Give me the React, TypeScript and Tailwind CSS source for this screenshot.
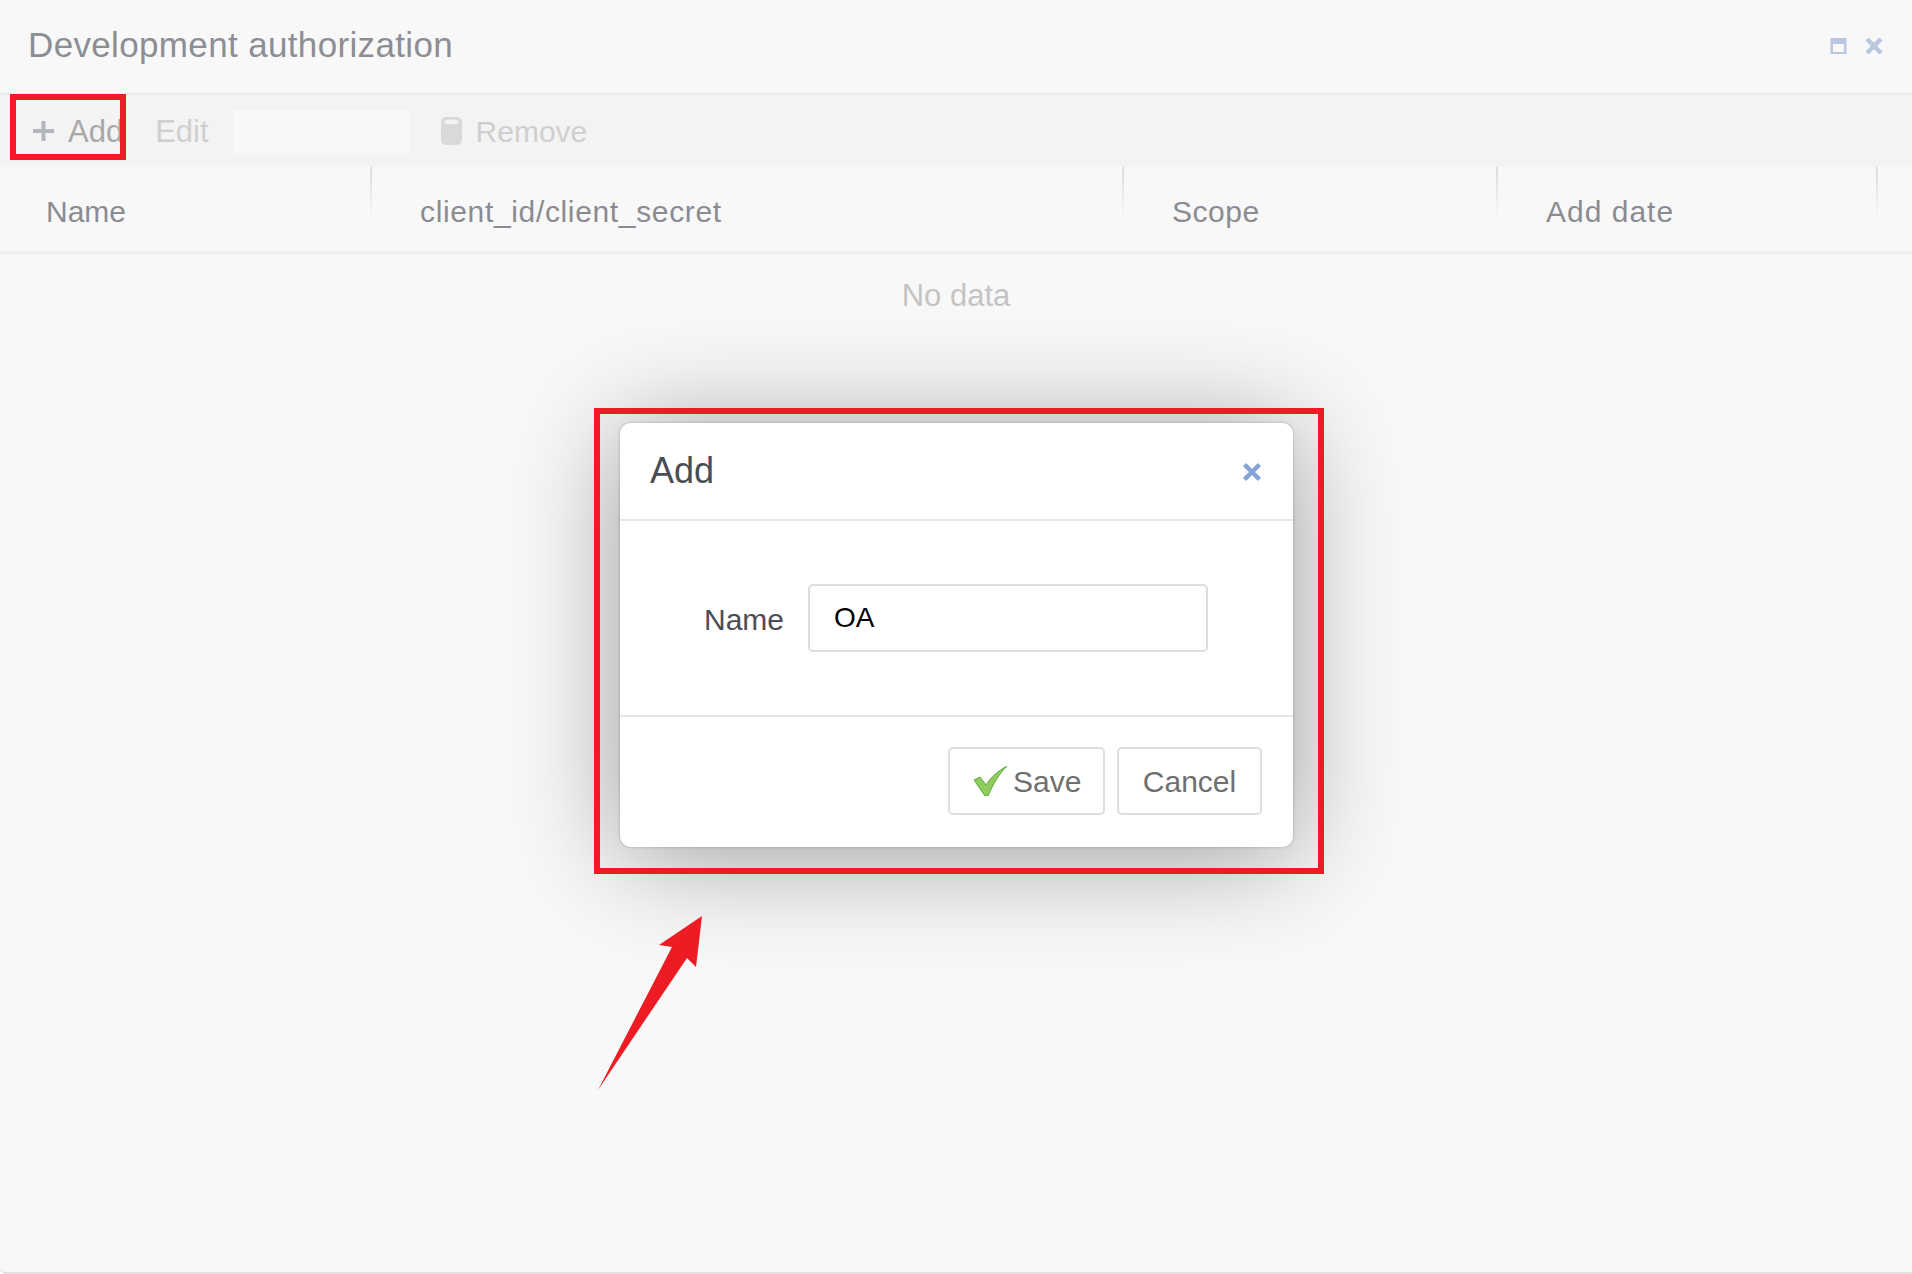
import { useState } from "react";

const columns = [
  { title: "Name", cls: "w-[371px] pl-[46px]" },
  { title: "client_id/client_secret", cls: "w-[752px] pl-[49px] tracking-[0.65px]" },
  { title: "Scope", cls: "w-[374px] pl-[49px] tracking-[0.5px]" },
  { title: "Add date", cls: "w-[380px] pl-[49px] tracking-[1px]" },
];

export default function App() {
  const [name, setName] = useState("OA");
  return (
    <div className="relative box-border h-[1274px] overflow-hidden rounded-bl-[6px] border-b-2 border-[#e2e2e2] bg-[#f8f8f8] font-['Liberation_Sans',Arial,sans-serif]">
      {/* window behind the dialog */}
      <div className="flex h-[95px] items-center justify-between border-b-2 border-[#ebebeb] pl-[28px] pr-[29px]">
        <div className="pb-[3px] text-[35px] tracking-[0.35px] text-[#8c8e94]">Development authorization</div>
        <div className="flex items-center gap-[18px] pb-[2px]">
          <svg width="17" height="16" viewBox="0 0 17 16">
            <rect x="0.5" y="0" width="16" height="16" fill="#b9c7e0" />
            <rect x="3" y="6" width="11" height="8" fill="#f8f8f8" />
          </svg>
          <svg width="18" height="16" viewBox="0 0 18 16">
            <path d="M2 1 L16 15 M16 1 L2 15" stroke="#b9c7e0" strokeWidth="4.5" />
          </svg>
        </div>
      </div>

      <div className="flex h-[72px] items-center bg-[#f3f3f3] text-[30px]">
        <div className="flex items-center pl-[33px] text-[31px] text-[#a8a8a8]">
          <svg width="21" height="20" viewBox="0 0 21 20">
            <path d="M10.5 0 V20 M0 10 H21" stroke="#b3b6bd" strokeWidth="4" />
          </svg>
          <span className="ml-[14px] pt-[2px]">Add</span>
        </div>
        <span className="ml-[32px] pt-[2px] text-[31px] text-[#cfcfcf]">Edit</span>
        <div className="ml-[24px] h-[43px] w-[176px] bg-[#f8f8f8]" />
        <svg className="ml-[32px]" width="21" height="28" viewBox="0 0 21 28">
          <rect x="0" y="0" width="21" height="28" rx="5" fill="#d8d9db" />
          <ellipse cx="10.5" cy="5" rx="7.5" ry="2.5" fill="#f3f3f3" />
        </svg>
        <span className="ml-[14px] text-[#cfcfcf]">Remove</span>
      </div>

      <div className="flex h-[88px] border-b-4 border-[#efefef]">
        {columns.map((c) => (
          <div key={c.title} className={`relative flex items-center pt-[4px] text-[30px] text-[#8a8c92] ${c.cls}`}>
            {c.title}
            <span className="absolute -right-[1px] top-0 h-[52px] w-[2px] bg-gradient-to-b from-[#dcdcdc] to-[#f8f8f8]" />
          </div>
        ))}
      </div>
      <div className="pt-[18px] text-center text-[31px] text-[#c4c4c4]">No data</div>

      {/* dialog */}
      <div className="absolute left-[620px] top-[423px] w-[673px] rounded-[11px] bg-white shadow-[0_0_3px_rgba(0,0,0,0.25),0_8px_110px_rgba(0,0,0,0.38)]">
        <div className="flex h-[98px] items-center justify-between border-b-2 border-[#e6e6e6] pl-[30px] pr-[31px]">
          <span className="text-[36px] text-[#4a4d55]">Add</span>
          <svg className="mt-[2px]" width="20" height="20" viewBox="0 0 20 20">
            <path d="M2.5 2.5 L17.5 17.5 M17.5 2.5 L2.5 17.5" stroke="#86a3d6" strokeWidth="4.5" />
          </svg>
        </div>
        <div className="flex h-[196px] items-center border-b-2 border-[#e6e6e6] pl-[84px]">
          <label className="pt-[2px] text-[30px] text-[#4a4d55]">Name</label>
          <input
            value={name}
            onChange={(e) => setName(e.target.value)}
            className="ml-[24px] h-[68px] w-[400px] rounded-[5px] border-2 border-[#dedede] bg-white pl-[24px] text-[28px] text-black outline-none"
          />
        </div>
        <div className="flex h-[130px] items-start justify-end gap-[12px] pr-[31px] pt-[30px]">
          <button className="flex h-[68px] w-[157px] items-center rounded-[5px] border-2 border-[#dedede] pl-[24px] text-[30px] text-[#6f6f6f]">
            <svg width="33" height="30" viewBox="0 0 33 30">
              <path d="M0 14 L6 11 L12 19 C17 11 24 5 33 0 C25 8 19 18 14 30 L11 30 Z" fill="#8fcc5c" stroke="#5fa83d" strokeWidth="1" />
            </svg>
            <span className="ml-[6px]">Save</span>
          </button>
          <button className="h-[68px] w-[145px] rounded-[5px] border-2 border-[#dedede] text-[30px] text-[#6f6f6f]">Cancel</button>
        </div>
      </div>

      {/* red annotations */}
      <div className="absolute left-[10px] top-[94px] h-[66px] w-[116px] border-[6px] border-[#ed1c24]" />
      <div className="absolute left-[594px] top-[408px] h-[466px] w-[730px] border-[6px] border-[#ed1c24]" />
      <svg className="absolute left-0 top-0" width="1912" height="1274" viewBox="0 0 1912 1274">
        <path d="M702 916 L659 945 L672 947 L598 1090 L687 958 L696 967 Z" fill="#ed1c24" />
      </svg>
    </div>
  );
}
